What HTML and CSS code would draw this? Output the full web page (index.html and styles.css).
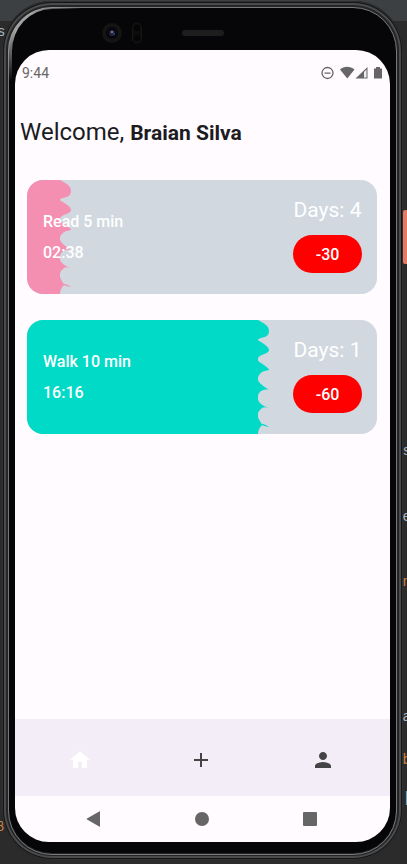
FILE: index.html
```html
<!DOCTYPE html>
<html lang="en">
<head>
<meta charset="utf-8">
<meta name="viewport" content="width=device-width, initial-scale=1">
<title>Welcome</title>
<link rel="stylesheet" href="styles.css">
</head>
<body>
<svg class="defs" aria-hidden="true">
  <symbol id="wave" viewBox="0 0 12 114">
    <path d="M0 0H1C6 3 12 5 12 11C12 16 8 17 4 18C0 19 0 20 4 22C8 25 12 27 12 30C12 33 6 34 3 36C0 38 0 41 4 43C8 46 12 48 12 50C8 51 5 51 3 54C0 57 0 61 4 64C7 67 10 68 12 70C8 69 5 70 3 72C0 75 0 80 3 83C6 86 9 87 12 88C8 87 6 87 4 89C0 92 0 97 3 101C4 103 4 104 6 104C9 105 11 106 12 107C9 106 6 106 5 105C2 108 1 111 1 114H0Z"/>
  </symbol>
</svg>
<div class="editor" aria-hidden="true">
  <span class="marker"></span>
  <span class="code c1">s</span><span class="code c2">e</span><span class="code c3 key">n</span>
  <span class="code c4">a</span><span class="code c5 key">b</span><span class="code c6">|</span>
  <span class="code l1">s</span><span class="code l2 key">8</span>
</div>
<div class="phone">
  <div class="bezel">
    <svg class="sensors" viewBox="0 0 122 30" aria-hidden="true">
      <circle cx="10" cy="15" r="10" fill="#141414"/><circle cx="10" cy="15" r="6" fill="#08080c"/>
      <circle cx="10" cy="15" r="3" fill="#20243c"/><circle cx="10" cy="14" r="1" fill="#8c90b4"/><circle cx="12" cy="16" r="1" fill="#343c78"/>
      <rect x="30.500" y="5" width="9" height="20" rx="4.500" fill="#0c0c0c" stroke="#161616"/>
      <circle cx="35" cy="10" r="3" fill="#050505"/><circle cx="35" cy="20" r="3" fill="#050505"/>
      <rect x="80" y="12" width="42" height="6" rx="3" fill="#1d1d1d"/>
    </svg>
  </div>
  <div class="screen">
    <header class="status">
      <span>9:44</span>
      <svg viewBox="0 0 62 14" aria-hidden="true" fill="#666">
        <circle cx="6.500" cy="7" r="5.500" fill="none" stroke="#666" stroke-width="1.300"/><path d="M3.500 6.400h6v1.300h-6z"/>
        <path d="M19 3.500C23-.2 29-.2 33.500 3.500L26.300 12.500Z"/>
        <path d="M34.500 12.500L46.500 1V12.500Z"/><path d="M43 6L45.500 3.600V11.500H43Z" fill="#eee"/>
        <path d="M53 2.500h2V1h4v1.500h2v10h-8z"/>
      </svg>
    </header>
    <main>
      <h1>Welcome, <strong>Braian Silva</strong></h1>
      <section class="card pink">
        <div class="progress"><div class="fill" style="width:9.5%"></div><svg class="wave" preserveAspectRatio="none" aria-hidden="true"><use href="#wave"/></svg></div>
        <div class="task"><h2>Read 5 min</h2><p>02:38</p></div>
        <div class="side"><p>Days: 4</p><button type="button">-30</button></div>
      </section>
      <section class="card teal">
        <div class="progress"><div class="fill" style="width:66.1%"></div><svg class="wave" preserveAspectRatio="none" aria-hidden="true"><use href="#wave"/></svg></div>
        <div class="task"><h2>Walk 10 min</h2><p>16:16</p></div>
        <div class="side"><p>Days: 1</p><button type="button">-60</button></div>
      </section>
    </main>
    <nav class="tabs">
      <button type="button" class="active" aria-label="Home"><svg viewBox="0 0 24 24"><path d="M10 20v-6h4v6h5v-8h3L12 3 2 12h3v8z"/></svg></button>
      <button type="button" aria-label="Add"><svg viewBox="0 0 24 24"><path d="M19 13h-6v6h-2v-6H5v-2h6V5h2v6h6z"/></svg></button>
      <button type="button" aria-label="Profile"><svg viewBox="0 0 24 24"><path d="M12 12c2.210 0 4-1.790 4-4s-1.790-4-4-4-4 1.790-4 4 1.790 4 4 4zm0 2c-2.670 0-8 1.340-8 4v2h16v-2c0-2.660-5.330-4-8-4z"/></svg></button>
    </nav>
    <nav class="system">
      <button type="button" aria-label="Back"><svg viewBox="0 0 16 16"><path d="M15 .8V15.200Q15 16 14.200 15.500L2 8.500Q1.200 8 2 7.500L14.200.5Q15 0 15 .8Z"/></svg></button>
      <button type="button" aria-label="Home screen"><svg viewBox="0 0 16 16"><circle cx="8" cy="8" r="7"/></svg></button>
      <button type="button" aria-label="Recent apps"><svg viewBox="0 0 16 16"><rect x="1" y="1" width="14" height="14" rx="1"/></svg></button>
    </nav>
  </div>
</div>
</body>
</html>
```
FILE: styles.css
```css
* { box-sizing: border-box; }
body {
  margin: 0;
  min-height: 100vh;
  display: flex;
  padding: 1px 4px 4px 2px;
  background: linear-gradient(#3c4043 21px, #2b2b2b 21px);
  font-family: Roboto, "Liberation Sans", sans-serif;
  color: #1c1b1f;
  position: relative;
  overflow: hidden;
}
h1, h2, p { margin: 0; }
button { border: 0; padding: 0; font: inherit; cursor: pointer; }
.defs { position: absolute; width: 0; height: 0; }

/* Editor window behind the device */
.editor { position: absolute; inset: 0; overflow: hidden; }
.code { position: absolute; right: -4px; font: 14px/16px "Liberation Mono", monospace; color: #a9b7c6; }
.key { color: #cc8242; }
.marker { position: absolute; right: 0; top: 210px; width: 4px; height: 54px; background: #e27b62; border-radius: 2px 0 0 2px; }
.c1 { top: 443px; }
.c2 { top: 509px; }
.c3 { top: 574px; }
.c4 { top: 709px; }
.c5 { top: 752px; }
.c6 { top: 790px; }
.l1 { right: auto; left: -3px; top: 24px; }
.l2 { right: auto; left: -4px; top: 819px; }

/* Device */
.phone {
  flex: 1;
  position: relative;
  display: flex;
  flex-direction: column;
  padding: 0 13px 18px 13px;
  border-radius: 50px;
  background: #060608;
  box-shadow: inset 0 0 0 1px #2e3032, inset 0 0 0 2px #161617, inset 0 0 0 4px #4a4b4d, inset 0 0 0 7px #242526;
}
.phone::before,
.phone::after { content: ""; position: absolute; inset: 6px 6px 5px 6px; border-radius: 44px; border: 1px solid #77787a; }
.phone::after { border-width: 2px 2px 1px 4px; border-color: #a0a29f; mask-image: radial-gradient(circle at 16px 16px, #000 12px, transparent 60px); }
.bezel { height: 49px; flex: none; padding: 17px 0 0 87px; }
.sensors { display: block; width: 122px; height: 30px; }
.screen { flex: 1; display: flex; flex-direction: column; background: #fffbfe; border-radius: 34px; overflow: hidden; }

.status { height: 46px; display: flex; justify-content: space-between; align-items: center; padding: 0 7px; font-size: 14px; line-height: 16px; color: #666; }
.status svg { width: 62px; height: 14px; }

main { flex: 1; display: flex; flex-direction: column; padding: 20px 13px 20px 12px; }
h1 { margin: 0 -7px 31px; font-size: 24px; line-height: 32px; font-weight: 400; }
h1 strong { font-size: 21px; font-weight: 700; }

.card { position: relative; display: flex; justify-content: space-between; min-height: 114px; margin-bottom: 26px; padding: 15px 15px 15px 16px; border-radius: 16px; overflow: hidden; background: #d1d8e0; color: #fff; }
.progress { position: absolute; inset: 0; display: flex; }
.fill { background: var(--tone); }
.wave { width: 12px; height: 100%; margin-left: -1px; fill: var(--tone); }
.pink { --tone: #f48fb1; }
.teal { --tone: #00dac6; }
.task, .side { position: relative; }
.task { display: flex; flex-direction: column; justify-content: center; gap: 11px; font-size: 16px; line-height: 20px; font-weight: 500; }
.task h2 { font: inherit; }
.side { display: flex; flex-direction: column; align-items: center; gap: 10px; }
.side p { font-size: 21px; line-height: 30px; }
.side button { width: 69px; height: 38px; border-radius: 19px; background: #f00; color: #fff; font-size: 16px; font-weight: 500; }

.tabs { display: grid; grid-template-columns: repeat(3, 1fr); height: 77px; padding: 4px 6px 0 4px; background: #f3edf7; }
.tabs button, .system button { display: grid; place-items: center; background: none; }
.tabs svg { width: 24px; height: 24px; fill: #444346; }
.tabs .active svg { fill: #fff; }
.system { display: flex; justify-content: space-between; height: 46px; padding: 0 72px 0 70px; }
.system button { width: 16px; }
.system svg { width: 16px; height: 16px; fill: #666; }
```
